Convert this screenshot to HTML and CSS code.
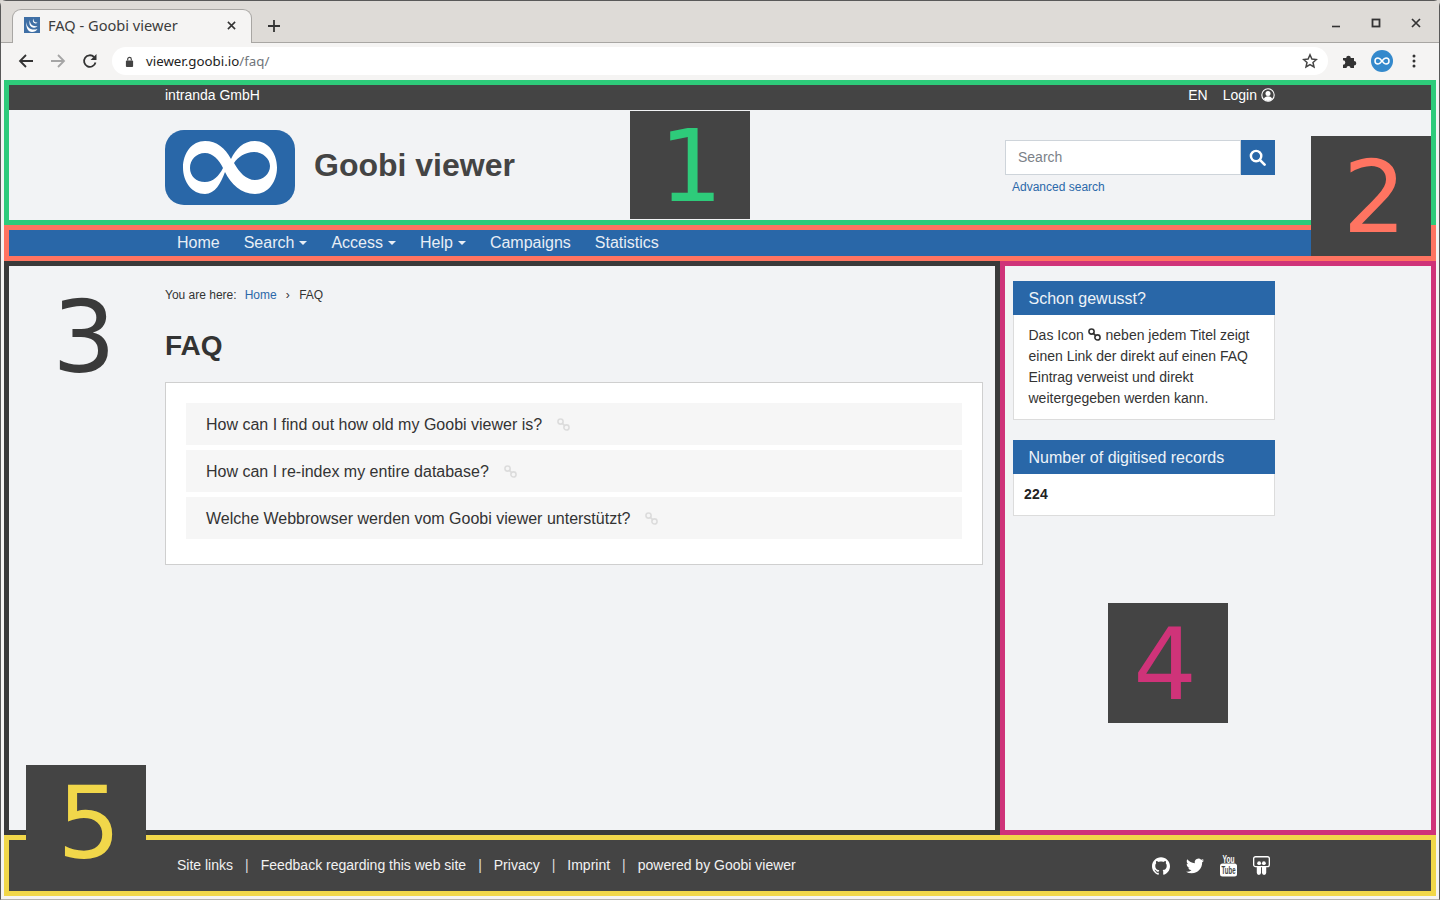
FILE: index.html
```html
<!DOCTYPE html>
<html lang="en">
<head>
<meta charset="utf-8">
<title>FAQ - Goobi viewer</title>
<link rel="stylesheet" href="styles.css">
</head>
<body>
<div class="window">
  <div class="tabstrip">
    <div class="tab">
      <svg class="favicon" viewBox="0 0 16 16"><rect width="16" height="16" fill="#3f6fa5"/><path d="M2.500 5c0 6 5 9 11 7-1 2-3 3-5.500 3C4 15 1.500 10 2.500 5z" fill="#fff"/><path d="M6 3c-.5 4 3 7 7.500 6-1 1.500-3 2-4.500 1.500C6 10 4.500 6.500 6 3z" fill="#fff"/><path d="M9.500 1.500c-.5 2.500 1.500 4.500 4 4-.8 1-2.200 1.200-3.300.6-1.400-.8-1.800-3-.7-4.600z" fill="#fff"/></svg>
      <span class="tab-title">FAQ - Goobi viewer</span>
      <svg class="tab-close" viewBox="0 0 10 10"><path d="M1 1l8 8M9 1l-8 8" stroke="#333" stroke-width="1.700"/></svg>
    </div>
    <svg class="new-tab" viewBox="0 0 12 12"><path d="M6 0v12M0 6h12" stroke="#333" stroke-width="1.800"/></svg>
    <div class="win-controls">
      <span class="win-btn"><svg viewBox="0 0 10 10"><path d="M1 8.500h8" stroke="#333" stroke-width="1.600"/></svg></span>
      <span class="win-btn"><svg viewBox="0 0 10 10"><rect x="1.500" y="1.500" width="7" height="7" fill="none" stroke="#333" stroke-width="1.800"/></svg></span>
      <span class="win-btn"><svg viewBox="0 0 10 10"><path d="M1 1l8 8M9 1l-8 8" stroke="#333" stroke-width="1.700"/></svg></span>
    </div>
  </div>
  <div class="toolbar">
    <span class="tool"><svg viewBox="0 0 16 16"><path d="M15 8H2M8 2L2 8l6 6" fill="none" stroke="#333" stroke-width="1.800"/></svg></span>
    <span class="tool"><svg viewBox="0 0 16 16"><path d="M1 8h13M8 2l6 6-6 6" fill="none" stroke="#a5a5a5" stroke-width="1.800"/></svg></span>
    <span class="tool"><svg viewBox="0 0 16 16"><path d="M13.500 9.500A5.800 5.800 0 1 1 12 4" fill="none" stroke="#333" stroke-width="1.800"/><path d="M14.500 1v6h-6z" fill="#333"/></svg></span>
    <div class="omnibox">
      <svg class="lock" viewBox="0 0 10 12"><rect x="1" y="5" width="8" height="7" rx="1" fill="#444"/><path d="M3 5V3.500a2 2 0 0 1 4 0V5" fill="none" stroke="#444" stroke-width="1.300"/></svg>
      <span class="url">viewer.goobi.io<span class="url-path">/faq/</span></span>
      <svg class="star" viewBox="0 0 16 16"><path d="M8 1.800l1.900 4.200 4.500.5-3.400 3 1 4.500L8 11.700 4 14l1-4.500-3.400-3 4.500-.5z" fill="none" stroke="#444" stroke-width="1.500"/></svg>
    </div>
    <span class="tool tool-first"><svg viewBox="0 0 16 16"><path d="M1 5h3.200a2.300 2.300 0 1 1 4.600 0H12v3a2.300 2.300 0 1 1 0 4.600V15H8.500a2 2 0 1 0-4 0H1v-3.200a2.300 2.300 0 1 0 0-4.600z" fill="#333"/></svg></span>
    <span class="tool"><span class="avatar"><svg viewBox="0 0 22 22"><path d="M11 11c-1.500-2-2.500-3-4-3a3 3 0 0 0 0 6c1.500 0 2.500-1 4-3s2.500-3 4-3a3 3 0 0 1 0 6c-1.500 0-2.500-1-4-3z" fill="none" stroke="#fff" stroke-width="1.500"/></svg></span></span>
    <span class="tool"><svg viewBox="0 0 16 16"><circle cx="8" cy="3" r="1.500" fill="#333"/><circle cx="8" cy="8" r="1.500" fill="#333"/><circle cx="8" cy="13" r="1.500" fill="#333"/></svg></span>
  </div>

  <div class="viewport">
    <section class="region region-1">
      <div class="topbar">
        <span>intranda GmbH</span>
        <div class="topbar-right">
          <span>EN</span>
          <span class="login">Login
            <svg class="user-icon" viewBox="0 0 14 14"><circle cx="7" cy="7" r="6.200" fill="none" stroke="#fff" stroke-width="1.100"/><circle cx="7" cy="5.400" r="2.500" fill="#fff"/><path d="M2.800 11c.8-2 2.400-2.800 4.200-2.800s3.400.8 4.200 2.800A6 6 0 0 1 7 13a6 6 0 0 1-4.200-2z" fill="#fff"/></svg>
          </span>
        </div>
      </div>
      <div class="masthead">
        <svg class="logo" viewBox="0 0 130 75"><rect width="130" height="75" rx="19" fill="#2967a8"/><path fill="#fff" fill-rule="evenodd" d="M66 29C60 18 52 11 40 11 27 11 18 23 18 37.500 18 52 27 64 40 64 50 64 56 53 60 42 66 54 76 64 90 64 103 64 112 52 112 37.500 112 23 103 11 90 11 78 11 71 19 66 29zM25 38C25 30 31 23 40 23 48 23 54 30 58 38 54 46 48 52 40 52 31 52 25 46 25 38zM69 33C73 27 80 22 89 22 98 22 105 29 105 36 105 44 98 50 90 50 81 50 74 42 69 33z"/></svg>
        <div class="site-title">Goobi viewer</div>
        <div class="search">
          <div class="search-row">
            <div class="search-input">Search</div>
            <div class="search-btn"><svg viewBox="0 0 18 18"><circle cx="7.500" cy="7.500" r="5.500" fill="none" stroke="#fff" stroke-width="2.600"/><path d="M11.500 11.500l5 5" stroke="#fff" stroke-width="2.800" stroke-linecap="round"/></svg></div>
          </div>
          <a class="advanced">Advanced search</a>
        </div>
      </div>
    </section>

    <section class="region region-2">
      <nav class="nav">
        <a class="nav-item">Home</a>
        <a class="nav-item">Search<i class="caret"></i></a>
        <a class="nav-item">Access<i class="caret"></i></a>
        <a class="nav-item">Help<i class="caret"></i></a>
        <a class="nav-item">Campaigns</a>
        <a class="nav-item">Statistics</a>
      </nav>
    </section>

    <div class="main">
      <section class="region region-3">
        <div class="crumbs"><span class="crumb-label">You are here:</span><a class="crumb-link">Home</a><span class="crumb-sep">›</span><span>FAQ</span></div>
        <h1 class="page-title">FAQ</h1>
        <div class="card">
          <div class="faq-item"><span>How can I find out how old my Goobi viewer is?</span><svg class="chain chain-faint" viewBox="0 0 14 14"><use href="#chain"/></svg></div>
          <div class="faq-item"><span>How can I re-index my entire database?</span><svg class="chain chain-faint" viewBox="0 0 14 14"><use href="#chain"/></svg></div>
          <div class="faq-item"><span>Welche Webbrowser werden vom Goobi viewer unterstützt?</span><svg class="chain chain-faint" viewBox="0 0 14 14"><use href="#chain"/></svg></div>
        </div>
      </section>
      <section class="region region-4">
        <div class="widget">
          <div class="widget-head">Schon gewusst?</div>
          <div class="widget-body">
            <span class="body-line">Das Icon <svg class="chain chain-dark" viewBox="0 0 14 14"><use href="#chain"/></svg> neben jedem Titel zeigt</span>
            <span class="body-line">einen Link der direkt auf einen FAQ Eintrag verweist und direkt weitergegeben werden kann.</span>
          </div>
        </div>
        <div class="widget">
          <div class="widget-head">Number of digitised records</div>
          <div class="widget-count">224</div>
        </div>
      </section>
    </div>

    <footer class="region region-5">
      <div class="foot-links">
        <a>Site links</a><span class="pipe">|</span>
        <a>Feedback regarding this web site</a><span class="pipe">|</span>
        <a>Privacy</a><span class="pipe">|</span>
        <a>Imprint</a><span class="pipe">|</span>
        <a>powered by Goobi viewer</a>
      </div>
      <div class="foot-icons">
        <svg class="social" viewBox="0 0 24 24"><path fill="#fff" d="M12 .297c-6.630 0-12 5.373-12 12 0 5.303 3.438 9.800 8.205 11.385.6.113.82-.258.82-.577 0-.285-.01-1.040-.015-2.040-3.338.724-4.042-1.610-4.042-1.610C4.422 18.070 3.633 17.700 3.633 17.700c-1.087-.744.084-.729.084-.729 1.205.084 1.838 1.236 1.838 1.236 1.070 1.835 2.809 1.305 3.495.998.108-.776.417-1.305.76-1.605-2.665-.3-5.466-1.332-5.466-5.930 0-1.310.465-2.380 1.235-3.220-.135-.303-.54-1.523.105-3.176 0 0 1.005-.322 3.300 1.230.96-.267 1.980-.399 3-.405 1.020.006 2.040.138 3 .405 2.280-1.552 3.285-1.230 3.285-1.230.645 1.653.24 2.873.12 3.176.765.84 1.230 1.910 1.230 3.220 0 4.610-2.805 5.625-5.475 5.920.42.36.81 1.096.81 2.220 0 1.606-.015 2.896-.015 3.286 0 .315.21.69.825.57C20.565 22.092 24 17.592 24 12.297c0-6.627-5.373-12-12-12"/></svg>
        <svg class="social" viewBox="0 0 24 24"><path fill="#fff" d="M23.953 4.570a10 10 0 01-2.825.775 4.958 4.958 0 002.163-2.723c-.951.555-2.005.959-3.127 1.184a4.920 4.920 0 00-8.384 4.482C7.690 8.095 4.067 6.130 1.640 3.162a4.822 4.822 0 00-.666 2.475c0 1.710.87 3.213 2.188 4.096a4.904 4.904 0 01-2.228-.616v.06a4.923 4.923 0 003.946 4.827 4.996 4.996 0 01-2.212.085 4.936 4.936 0 004.604 3.417 9.867 9.867 0 01-6.102 2.105c-.39 0-.779-.023-1.170-.067a13.995 13.995 0 007.557 2.209c9.053 0 13.998-7.496 13.998-13.985 0-.21 0-.42-.015-.63A9.935 9.935 0 0024 4.590z"/></svg>
        <svg class="social social-yt" viewBox="0 0 17 22"><text class="yt-you" x="8.500" y="7.500" text-anchor="middle" textLength="12" lengthAdjust="spacingAndGlyphs">You</text><rect x="0" y="8.500" width="17" height="13" rx="2.500" fill="#fff"/><text class="yt-tube" x="8.500" y="19" text-anchor="middle" textLength="14" lengthAdjust="spacingAndGlyphs">Tube</text></svg>
        <svg class="social social-ss" viewBox="0 0 18 20"><rect x=".7" y=".7" width="16.600" height="10.500" rx="2" fill="none" stroke="#fff" stroke-width="1.400"/><circle cx="6.500" cy="7.500" r="2" fill="#fff"/><circle cx="11.500" cy="7.500" r="2" fill="#fff"/><path d="M4 11.500h4.500v6.200a2.250 2.250 0 0 1-4.500 0zM9.500 11.500H14v6.200a2.250 2.250 0 0 1-4.500 0z" fill="#fff"/></svg>
      </div>
    </footer>

    <div class="marker marker-1">1</div>
    <div class="marker marker-2">2</div>
    <div class="marker marker-3">3</div>
    <div class="marker marker-4">4</div>
    <div class="marker marker-5">5</div>
  </div>
</div>
<svg class="defs" width="0" height="0"><defs><g id="chain" fill="none" stroke="currentColor"><circle cx="3.800" cy="3.800" r="2.800" stroke-width="1.700"/><circle cx="10.200" cy="10.200" r="2.800" stroke-width="1.700"/><path d="M5.500 5.500l3 3" stroke-width="2"/></g></defs></svg>
</body>
</html>
```
FILE: styles.css
```css
* { box-sizing: border-box; }
html, body { margin: 0; padding: 0; height: 100%; }
body { font-family: "Liberation Sans", Arial, sans-serif; background: #d8d5d1; overflow: hidden; }
a { color: inherit; text-decoration: none; }
svg { display: block; }
.defs { position: absolute; }

.window { height: 900px; display: flex; flex-direction: column; border: 1px solid #595959; border-bottom-color: #b5b3b0; border-radius: 6px 6px 0 0; background: #f5f4f3; }

/* Browser chrome */
.tabstrip { height: 42px; flex: none; display: flex; align-items: flex-end; background: #dedbd7; border-bottom: 1px solid #a8a6a3; }
.tab { width: 240px; height: 34px; margin-left: 11px; margin-bottom: -1px; padding: 0 15px 3px 11px; display: flex; align-items: center; background: #f5f4f3; border: 1px solid #a8a6a3; border-bottom: 0; border-radius: 9px 9px 0 0; }
.favicon { width: 16px; height: 16px; flex: none; }
.tab-title { margin-left: 8px; flex: 1; font: 14.600px "Noto Sans", sans-serif; color: #3c3c3c; white-space: nowrap; }
.tab-close { width: 9px; height: 9px; flex: none; }
.new-tab { width: 12px; height: 12px; margin: 0 0 10px 16px; flex: none; }
.win-controls { margin-left: auto; display: flex; align-self: flex-start; margin-top: 17px; margin-right: 3px; }
.win-btn { width: 40px; display: flex; justify-content: center; }
.win-btn svg { width: 10px; height: 10px; }

.toolbar { height: 36px; margin-bottom: 1px; flex: none; display: flex; align-items: center; padding: 0 9px; background: #f5f4f3; }
.tool { width: 32px; height: 32px; flex: none; display: flex; align-items: center; justify-content: center; }
.tool svg { width: 16px; height: 16px; }
.tool-first { margin-left: 6px; }
.omnibox { flex: 1; height: 28px; margin-left: 6px; padding: 0 10px 0 13px; display: flex; align-items: center; background: #fff; border-radius: 14px; }
.lock { width: 9px; height: 11px; flex: none; }
.url { margin-left: 12px; font: 13.300px "Noto Sans", sans-serif; color: #222; }
.url-path { color: #70757a; }
.star { width: 16px; height: 16px; margin-left: auto; }
.avatar { width: 22px; height: 22px; border-radius: 50%; background: #3489cc; display: block; }
.tool .avatar svg { width: 22px; height: 22px; }

/* Page */
.viewport { flex: 1; position: relative; display: flex; flex-direction: column; margin: 0 3px 3px; background: #f2f3f5; min-height: 0; }
.region { border: 5px solid; }
.region-1 { border-color: #2ecb7a; flex: none; }
.region-2 { border-color: #ff7461; flex: none; }
.region-3 { border-color: #3a3a3a; width: 996px; flex: none; padding: 20px 12px 0 156px; }
.region-4 { border-color: #cf3379; flex: 1; padding: 15px 0 0 8px; }
.region-5 { border-color: #f1d74a; flex: none; height: 61px; background: #444; padding: 0 161px 0 168px; display: flex; align-items: center; justify-content: space-between; color: #f2f2f2; }

.topbar { height: 25px; background: #444; color: #fff; font-size: 14px; padding: 0 156px 5px; display: flex; align-items: center; justify-content: space-between; }
.topbar-right { display: flex; align-items: center; gap: 15px; }
.login { display: flex; align-items: center; gap: 4px; }
.user-icon { width: 14px; height: 14px; }

.masthead { height: 110px; padding: 20px 156px 0; display: flex; align-items: flex-start; }
.logo { width: 130px; height: 75px; flex: none; }
.site-title { margin: 15px 0 0 19px; font-size: 32px; line-height: 40px; font-weight: 700; color: #444; }
.search { margin: 10px 0 0 auto; width: 270px; }
.search-row { display: flex; height: 35px; }
.search-input { flex: 1; background: #fff; border: 1px solid #ced4da; padding-left: 12px; font-size: 14px; line-height: 33px; color: #7b8188; }
.search-btn { width: 34px; padding-right: 1px; background: #2967a8; display: flex; align-items: center; justify-content: center; }
.search-btn svg { width: 17px; height: 17px; }
.advanced { display: block; margin: 5px 0 0 7px; font-size: 12px; line-height: 14px; color: #2b68a9; }

.nav { height: 26px; background: #2967a8; padding-left: 156px; display: flex; align-items: center; color: #e8eef5; font-size: 16px; }
.nav-item { padding: 0 12px; display: flex; align-items: center; }
.caret { width: 0; height: 0; margin-left: 5px; border-left: 4px solid transparent; border-right: 4px solid transparent; border-top: 4px solid currentColor; }

.main { flex: 1; display: flex; min-height: 0; }
.crumbs { display: flex; align-items: center; font-size: 12px; line-height: 18px; color: #333; }
.crumb-label { margin-right: 8px; }
.crumb-link { color: #2b68a9; }
.crumb-sep { margin: 0 9.500px 0 9px; }
.page-title { margin: 25px 0 0; font-size: 28px; line-height: 34px; font-weight: 700; color: #333; }
.card { margin-top: 19px; background: #fff; border: 1px solid #cfcfcf; padding: 20px 20px 25px; display: flex; flex-direction: column; gap: 5px; }
.faq-item { height: 42px; padding: 2px 0 0 20px; display: flex; align-items: center; background: #f6f6f6; font-size: 16px; color: #333; }
.chain { display: inline-block; }
.chain-faint { width: 13px; height: 13px; margin: 0 0 2px 15px; color: #dcdcdc; }
.chain-dark { width: 13px; height: 13px; margin: 0 1px 0 0; color: #333; vertical-align: -1px; }

.widget { width: 262px; margin-bottom: 20px; }
.widget-head { height: 34px; background: #2967a8; color: #eef3f8; padding: 1px 0 0 15.500px; font-size: 16px; line-height: 34px; }
.widget-body { background: #fff; border: 1px solid #dcdcdc; border-top: 0; padding: 10px 14.500px 0; height: 105px; font-size: 14px; line-height: 21px; color: #333; }
.body-line { display: block; }
.widget-count { background: #fff; border: 1px solid #dcdcdc; border-top: 0; height: 42px; padding-left: 10px; font-size: 14px; font-weight: 700; line-height: 40px; color: #222; letter-spacing: .2px; }

.foot-links { display: flex; align-items: center; font-size: 14px; padding-bottom: 2px; }
.pipe { margin: 0 12px; color: #ddd; }
.foot-icons { display: flex; align-items: center; gap: 16px; }
.social { width: 18px; height: 18px; overflow: visible; }
.social-yt { width: 17px; height: 22px; }
.social-ss { width: 17px; height: 19px; }
.yt-you { font: 700 10px "Liberation Sans", sans-serif; fill: #fff; }
.yt-tube { font: 700 10.500px "Liberation Sans", sans-serif; fill: #444; }

/* Numbered overlays */
.marker { position: absolute; width: 120px; display: flex; align-items: center; justify-content: center; font-family: "DejaVu Sans", sans-serif; font-size: 100px; background: #444; }
.marker-1 { left: 626px; top: 31px; height: 108px; padding: 3px 0 0 2px; color: #2ecb7a; }
.marker-2 { left: 1307px; top: 56px; height: 120px; padding: 2px 0 0 7px; color: #ff7461; }
.marker-3 { left: 20px; top: 195px; height: 120px; padding-top: 5px; color: #3a3a3a; background: transparent; }
.marker-4 { left: 1104px; top: 523px; height: 120px; padding: 2px 6px 0 0; color: #cf3379; }
.marker-5 { left: 22px; top: 685px; height: 120px; padding: 0 0 4px 6px; color: #f1d74a; }
```
